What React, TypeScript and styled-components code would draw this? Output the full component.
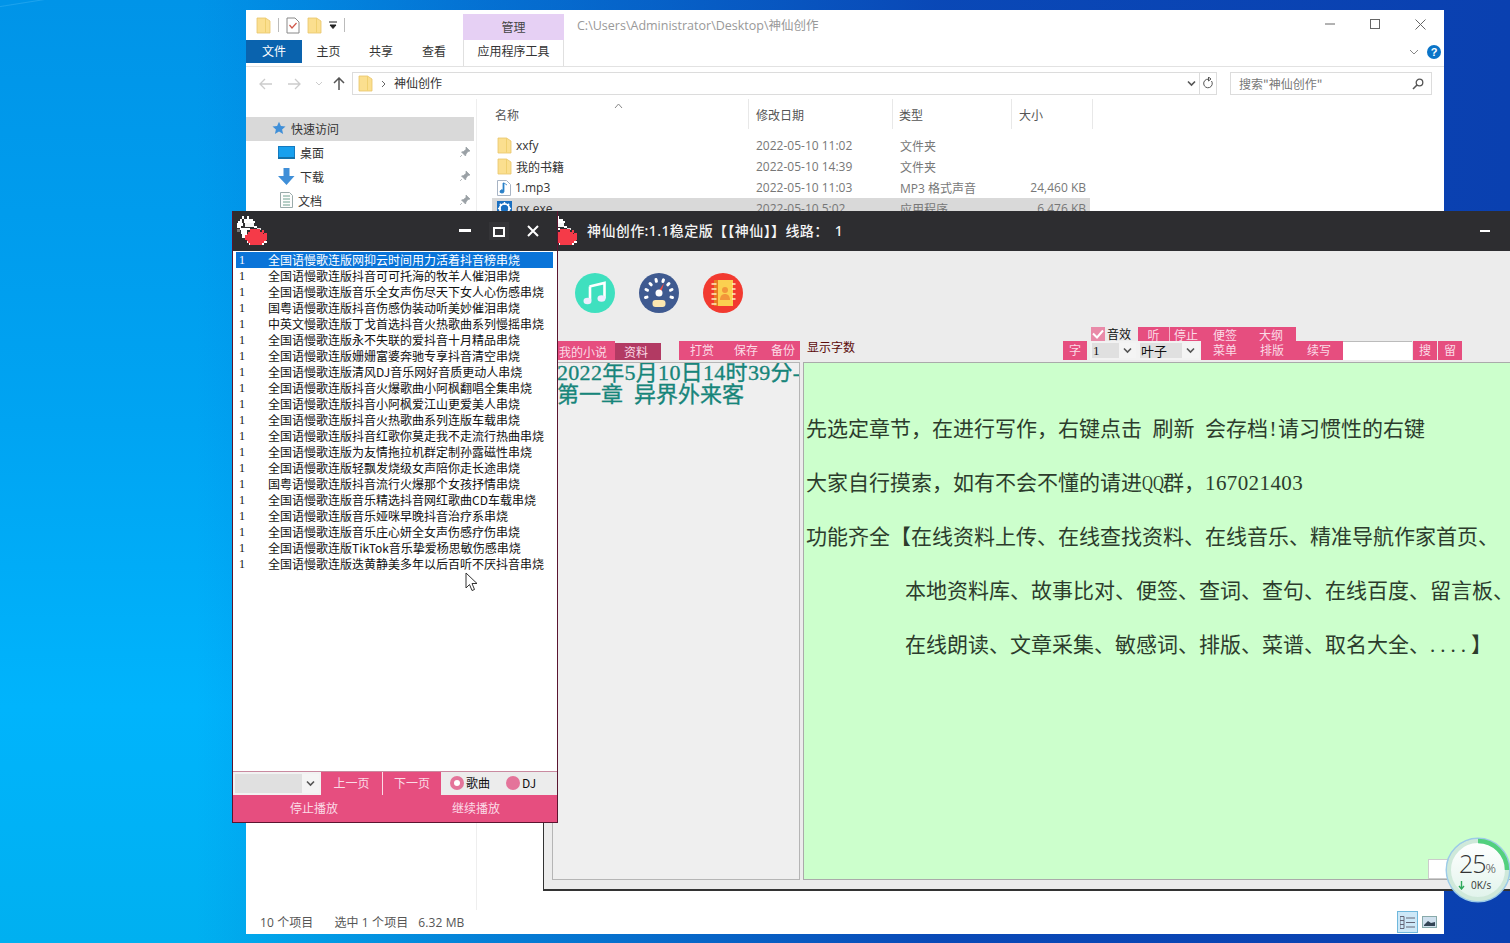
import React from "react";
import styled, { createGlobalStyle } from "styled-components";

const CJK = `"Noto Sans CJK SC", "Noto Sans", sans-serif`;
const UI = `"Open Sans", "Noto Sans CJK SC", sans-serif`;
const SERIF = `"Liberation Serif", "Noto Sans CJK SC", serif`;
const PINK = "#e64e7f";

const Global = createGlobalStyle`
  html, body { margin: 0; padding: 0; background: #0a60c8; }
  * { box-sizing: border-box; }
`;

const Desktop = styled.div`
  position: relative;
  width: 1510px;
  height: 943px;
  overflow: hidden;
  font-family: ${CJK};
  background:
    linear-gradient(171deg, transparent 5.5px, rgba(130,215,255,0.22) 6.5px, transparent 7.5px),
    linear-gradient(90deg, rgba(10,64,176,0) 13%, rgba(10,70,184,0.45) 32%, rgba(10,68,180,0.95) 62%, #0a40b0 100%),
    linear-gradient(180deg, #0094e8 0%, #00a4f2 45%, #00b4fc 75%, #00b0f0 100%);
`;

/* ---------- Explorer ---------- */
const Explorer = styled.div`
  position: absolute;
  left: 246px;
  top: 10px;
  width: 1198px;
  height: 924px;
  background: #fff;
  display: flex;
  flex-direction: column;
  font-family: ${UI};
  font-size: 12px;
  color: #555;
`;
const TitleRow = styled.div`
  display: flex;
  height: 30px;
  align-items: center;
  padding-left: 10px;
  flex: none;
`;
const Qat = styled.div`
  display: flex;
  align-items: center;
  gap: 7px;
  width: 207px;
`;
const QatSep = styled.span`
  width: 1px;
  height: 14px;
  background: #bbb;
`;
const ToolTab = styled.div`
  align-self: flex-end;
  width: 101px;
  height: 26px;
  padding-bottom: 2px;
  background: #e6d0f4;
  color: #444;
  display: flex;
  align-items: center;
  justify-content: center;
  font-family: ${CJK};
  font-size: 12px;
`;
const PathTitle = styled.div`
  margin-left: 13px;
  color: #999;
  font-size: 12.5px;
  flex: 1;
  padding-bottom: 1px;
`;
const WinBtns = styled.div`
  display: flex;
  align-items: center;
  gap: 35px;
  padding-right: 18px;
  color: #555;
  padding-bottom: 2px;
`;
const TabsRow = styled.div`
  display: flex;
  height: 24px;
  flex: none;
  align-items: stretch;
  font-family: ${CJK};
  font-size: 12px;
  color: #333;
`;
const FileTab = styled.div`
  width: 56px;
  height: 23px;
  background: #0a63ae;
  color: #fff;
  display: flex;
  align-items: center;
  justify-content: center;
  padding-bottom: 2px;
`;
const RibbonTab = styled.div<{ $w: number }>`
  width: ${(p) => p.$w}px;
  display: flex;
  align-items: center;
  justify-content: center;
  padding-bottom: 3px;
`;
const AppTab = styled.div`
  margin-left: 2px;
  width: 101px;
  display: flex;
  align-items: center;
  justify-content: center;
  border-left: 1px solid #e0e0e0;
  border-right: 1px solid #e0e0e0;
  height: 26px;
  padding-bottom: 5px;
  background: #fff;
`;
const RibbonEnd = styled.div`
  flex: 1;
  display: flex;
  justify-content: flex-end;
  align-items: center;
  gap: 8px;
  padding-right: 3px;
`;
const Help = styled.span`
  width: 14px;
  height: 14px;
  border-radius: 50%;
  background: #0a74c8;
  color: #fff;
  font: bold 11px/14px "Liberation Sans", sans-serif;
  text-align: center;
`;
const NavRow = styled.div`
  display: flex;
  align-items: center;
  height: 23px;
  margin-top: 8px;
  padding: 0 12px 0 13px;
  flex: none;
  position: relative;
  &::before {
    content: "";
    position: absolute;
    left: 0;
    right: 0;
    top: -6px;
    height: 1px;
    background: #e2e2e2;
  }
`;
const NavArrows = styled.div`
  display: flex;
  align-items: center;
  gap: 14px;
  width: 93px;
  color: #ccc;
`;
const UpArrow = styled.svg`
  margin-left: -4px;
`;
const AddressBox = styled.div`
  width: 865px;
  height: 23px;
  border: 1px solid #dcdcdc;
  display: flex;
  align-items: center;
  padding-left: 5px;
  gap: 8px;
  font-family: ${CJK};
  font-size: 12px;
  color: #333;
`;
const AddrName = styled.span`
  padding-bottom: 2px;
`;
const AddressEnd = styled.div`
  margin-left: auto;
  display: flex;
  align-items: center;
  height: 100%;
`;
const AddressChev = styled.div`
  display: flex;
  align-items: center;
  height: 100%;
  padding-right: 3px;
`;
const AddressRefresh = styled.div`
  display: flex;
  align-items: center;
  justify-content: center;
  width: 17px;
  height: 100%;
  border-left: 1px solid #dcdcdc;
`;
const SearchBox = styled.div`
  margin-left: 13px;
  width: 202px;
  height: 23px;
  border: 1px solid #dcdcdc;
  display: flex;
  align-items: center;
  justify-content: space-between;
  padding: 0 7px 0 8px;
  color: #777;
  font-family: ${CJK};
  font-size: 12px;
`;
const ContentArea = styled.div`
  flex: 1;
  display: flex;
  margin-top: 4px;
  min-height: 0;
`;
const Sidebar = styled.div`
  width: 231px;
  padding-top: 18px;
  border-right: 1px solid #eee;
  font-family: ${CJK};
  font-size: 12px;
  color: #333;
`;
const SideItem = styled.div<{ $active?: boolean; $indent: number }>`
  height: 24px;
  display: flex;
  align-items: center;
  gap: 5px;
  padding-left: ${(p) => p.$indent}px;
  padding-right: 3px;
  padding-bottom: 2px;
  width: 228px;
  background: ${(p) => (p.$active ? "#d9d9d9" : "transparent")};
`;
const SidePin = styled.span`
  margin-left: auto;
  display: flex;
`;
const FilePane = styled.div`
  flex: 1;
  display: flex;
  flex-direction: column;
  padding-left: 15px;
`;
const HeaderRow = styled.div`
  display: grid;
  grid-template-columns: 257px 144px 119px 81px;
  height: 30px;
  position: relative;
  font-family: ${CJK};
  color: #555;
`;
const HeaderCell = styled.div<{ $pl: number }>`
  display: flex;
  align-items: center;
  padding-left: ${(p) => p.$pl}px;
  border-right: 1px solid #e8e8e8;
`;
const SortCaret = styled.span`
  position: absolute;
  left: 122px;
  top: -4px;
  color: #888;
`;
const FileRows = styled.div`
  margin-top: 6px;
`;
const FileRow = styled.div<{ $sel?: boolean }>`
  display: grid;
  grid-template-columns: 257px 144px 119px 78px;
  height: 21px;
  align-items: center;
  width: 598px;
  background: ${(p) => (p.$sel ? "#d9d9d9" : "transparent")};
`;
const NameCell = styled.div`
  display: flex;
  align-items: center;
  gap: 4px;
  padding-left: 5px;
  color: #333;
`;
const DateCell = styled.div`
  padding-left: 7px;
  color: #777;
`;
const TypeCell = styled.div`
  padding-left: 7px;
  color: #777;
`;
const SizeCell = styled.div`
  text-align: right;
  padding-right: 4px;
  color: #777;
`;
const StatusBar = styled.div`
  height: 24px;
  flex: none;
  display: flex;
  align-items: center;
  padding-left: 14px;
  color: #555;
  position: relative;
  letter-spacing: 0.1px;
`;
const StatusGap = styled.span<{ $w: number }>`
  margin-left: ${(p) => p.$w}px;
`;
const ViewBtns = styled.div`
  position: absolute;
  right: 6px;
  bottom: 1px;
  display: flex;
  gap: 2px;
  align-items: center;
`;
const ViewBtn = styled.div<{ $on?: boolean; $w: number }>`
  width: ${(p) => p.$w}px;
  height: 22px;
  display: flex;
  align-items: center;
  justify-content: center;
  background: ${(p) => (p.$on ? "#cde8f8" : "transparent")};
  border: 1px solid ${(p) => (p.$on ? "#70b8dc" : "transparent")};
`;

/* ---------- Main window ---------- */
const MainWin = styled.div`
  position: absolute;
  left: 543px;
  top: 211px;
  width: 967px;
  height: 680px;
  background: #ececec;
  border-left: 1px solid #333;
  border-bottom: 2px solid #333;
  display: flex;
  flex-direction: column;
`;
const DarkBar = styled.div`
  height: 40px;
  flex: none;
  background: #2d2d30;
  display: flex;
  align-items: center;
  color: #fff;
`;
const MainTitle = styled.div`
  margin-left: 9px;
  font-size: 14px;
  font-weight: 500;
  color: #f4f4f4;
  flex: 1;
  white-space: pre;
  letter-spacing: 0.4px;
  padding-bottom: 2px;
  font-family: "Noto Sans", ${CJK};
`;
const TitleColon = styled.span`
  margin-right: 6px;
`;
const MainLogo = styled.div`
  margin-left: 2px;
  display: flex;
`;
const MainMin = styled.div`
  width: 10px;
  height: 2px;
  background: #fff;
  margin-right: 20px;
`;
const IconRow = styled.div`
  height: 76px;
  flex: none;
  display: flex;
  gap: 24px;
  padding: 22px 0 0 31px;
`;
const ToolRow = styled.div`
  height: 35px;
  flex: none;
  display: flex;
  align-items: flex-end;
  padding-left: 14px;
  padding-bottom: 2px;
`;
const NovelTab = styled.div<{ $dark?: boolean; $w: number }>`
  width: ${(p) => p.$w}px;
  height: ${(p) => (p.$dark ? 17 : 19)}px;
  background: ${(p) => (p.$dark ? "#b23a63" : PINK)};
  color: #fbdbe6;
  font-size: 12px;
  display: flex;
  align-items: center;
  padding-left: ${(p) => (p.$dark ? 9 : 1)}px;
  padding-top: ${(p) => (p.$dark ? 0 : 1)}px;
`;
const ActionTabs = styled.div`
  margin-left: 18px;
  width: 121px;
  height: 19px;
  background: ${PINK};
  color: #fbdbe6;
  font-size: 12px;
  display: grid;
  grid-template-columns: 44px 37px 24px;
  padding-left: 11px;
  align-items: center;
  padding-bottom: 2px;
`;
const CountLabel = styled.div`
  margin-left: 7px;
  align-self: center;
  padding-top: 5px;
  font-size: 12px;
  color: #5c0a0a;
`;
const RightTools = styled.div`
  margin-left: auto;
  margin-right: 48px;
  width: 399px;
  display: flex;
  flex-direction: column;
`;
const ToolTop = styled.div`
  display: flex;
  height: 14px;
  padding-left: 28px;
  align-items: flex-start;
`;
const Check = styled.span`
  width: 14px;
  height: 14px;
  background: #e98aa8;
  display: flex;
  align-items: center;
  justify-content: center;
`;
const SfxLabel = styled.span`
  font-size: 12px;
  line-height: 14px;
  color: #111;
  margin-left: 2px;
  width: 31px;
`;
const TopPink = styled.div`
  width: 158px;
  height: 15px;
  background: ${PINK};
  color: #fbdbe6;
  font-size: 12px;
  display: grid;
  grid-template-columns: 32px 32px 46px 46px 2px;
  justify-items: center;
  align-items: center;
`;
const TopCell = styled.span<{ $sep?: boolean }>`
  width: 100%;
  height: 100%;
  line-height: 15px;
  text-align: center;
  border-right: ${(p) => (p.$sep ? "1px solid #f4b4c8" : "none")};
`;
const ToolBottom = styled.div`
  display: flex;
  height: 19px;
  align-items: stretch;
`;
const SqBtn = styled.div<{ $ml?: number }>`
  width: 24px;
  margin-left: ${(p) => p.$ml ?? 0}px;
  background: ${PINK};
  color: #fbdbe6;
  font-size: 12px;
  display: flex;
  align-items: center;
  justify-content: center;
  padding-bottom: 2px;
`;
const Drop = styled.div<{ $w: number; $ml?: number }>`
  width: ${(p) => p.$w}px;
  margin-left: ${(p) => p.$ml ?? 0}px;
  background: #f4f4f4;
  border: 2px solid #f2f2f2;
  display: flex;
  align-items: stretch;
  font-size: 13px;
  color: #111;
`;
const DropVal = styled.div<{ $serif?: boolean }>`
  flex: 1;
  background: #e0e0e0;
  padding-left: 1px;
  line-height: 15px;
  white-space: nowrap;
  font-family: ${(p) => (p.$serif ? SERIF : CJK)};
`;
const DropArrow = styled.div`
  width: 17px;
  display: flex;
  align-items: center;
  justify-content: center;
`;
const BottomPink = styled.div`
  width: 142px;
  background: ${PINK};
  color: #fbdbe6;
  font-size: 12px;
  display: grid;
  grid-template-columns: 48px 46px 48px;
  justify-items: center;
  align-items: center;
  padding-bottom: 2px;
`;
const SearchInput = styled.div`
  width: 69px;
  background: #fff;
  border-top: 1px solid #bbb;
`;
const Panels = styled.div`
  height: 518px;
  flex: none;
  display: flex;
  padding-left: 8px;
  gap: 3px;
`;
const ChapterPanel = styled.div`
  width: 248px;
  border: 1px solid #b5b5b5;
  background: #efefef;
  overflow: hidden;
  padding-left: 4px;
  color: #17857a;
  font-family: ${SERIF};
  font-size: 22px;
  line-height: 22px;
  font-weight: 400;
  white-space: pre;
  -webkit-text-stroke: 0.35px #17857a;
`;
const ChapterDate = styled.div`
  letter-spacing: 0.3px;
  margin-top: -1px;
`;
const Editor = styled.div`
  flex: 1;
  position: relative;
  background: #ccffcc;
  border-left: 1px solid #aaa;
  border-top: 1px solid #aaa;
  border-bottom: 1px solid #aaa;
  padding: 39px 0 0 2px;
  font-family: ${SERIF};
  font-size: 21px;
  line-height: 54px;
  color: #2c3c2c;
  white-space: pre;
  overflow: hidden;
`;
const EditorLine = styled.div<{ $indent?: boolean }>`
  padding-left: ${(p) => (p.$indent ? 99 : 0)}px;
`;
const Spaced = styled.span<{ $ls: number }>`
  letter-spacing: ${(p) => p.$ls}px;
`;
const Bang = styled.span`
  padding: 0 1.5px;
`;
const NarrowLatin = styled.span`
  display: inline-block;
  width: 21px;
  transform: scaleX(0.72);
  transform-origin: left center;
`;
const CornerBox = styled.div`
  position: absolute;
  right: 60px;
  bottom: 0;
  width: 22px;
  height: 20px;
  background: #fff;
  border: 1px solid #ccc;
`;

/* ---------- Player ---------- */
const Player = styled.div`
  position: absolute;
  left: 232px;
  top: 211px;
  width: 326px;
  height: 612px;
  border: 1px solid #5a1530;
  border-top: 0;
  display: flex;
  flex-direction: column;
  background: #fff;
`;
const PlayerLogo = styled.div`
  margin-left: 3px;
  display: flex;
  flex: 1;
`;
const CtrlBtn = styled.div`
  width: 34px;
  height: 24px;
  display: flex;
  align-items: center;
  justify-content: center;
`;
const MaxFace = styled.div`
  width: 20px;
  height: 18px;
  background: #343437;
  display: flex;
  align-items: center;
  justify-content: center;
`;
const CtrlRow = styled.div`
  display: flex;
  margin-right: 7px;
`;
const SongList = styled.div`
  flex: 1;
  padding: 1px 3px 0;
  font-size: 12px;
  color: #111;
`;
const Song = styled.div<{ $sel?: boolean }>`
  height: 16px;
  line-height: 16px;
  display: flex;
  white-space: nowrap;
  width: 317px;
  background: ${(p) => (p.$sel ? "#0a74d8" : "transparent")};
  color: ${(p) => (p.$sel ? "#fff" : "#111")};
`;
const SongNo = styled.span`
  width: 32px;
  padding-left: 3px;
  font-family: ${SERIF};
`;
const PlayerRow1 = styled.div`
  height: 24px;
  flex: none;
  display: flex;
  border-top: 1px solid #c98aa0;
  font-size: 12px;
`;
const PageBtns = styled.div`
  width: 120px;
  background: ${PINK};
  color: #fbdbe6;
  display: grid;
  grid-template-columns: 62px 58px;
`;
const PageBtn = styled.div<{ $sep?: boolean }>`
  display: flex;
  align-items: center;
  justify-content: center;
  padding-bottom: 2px;
  border-right: ${(p) => (p.$sep ? "1px solid #fbdbe6" : "none")};
`;
const Radios = styled.div`
  flex: 1;
  background: #ececec;
  display: flex;
  align-items: center;
  padding-left: 9px;
  padding-bottom: 2px;
  color: #111;
`;
const RadioDot = styled.span<{ $on?: boolean; $ml?: number }>`
  width: 14px;
  height: 14px;
  border-radius: 50%;
  margin-left: ${(p) => p.$ml ?? 0}px;
  margin-right: 2px;
  background: #e4749a;
  display: flex;
  align-items: center;
  justify-content: center;
  &::after {
    content: "";
    width: 6px;
    height: 6px;
    border-radius: 50%;
    background: ${(p) => (p.$on ? "#fff" : "transparent")};
  }
`;
const PlayerRow2 = styled.div`
  height: 27px;
  flex: none;
  background: ${PINK};
  color: #fbdbe6;
  font-size: 12px;
  display: grid;
  grid-template-columns: 162px 162px;
  justify-items: center;
  align-items: center;
  padding-bottom: 2px;
`;

/* ---------- Overlays ---------- */
const Cursor = styled.svg`
  position: absolute;
  left: 465px;
  top: 572px;
`;
const Speed = styled.div`
  position: absolute;
  left: 1445px;
  top: 837px;
  width: 66px;
  height: 66px;
`;
const SpeedRing = styled.svg`
  position: absolute;
  inset: 0;
`;
const SpeedPct = styled.div`
  position: absolute;
  left: 14px;
  top: 12px;
  font-family: "Open Sans", sans-serif;
  font-weight: 300;
  font-size: 25px;
  line-height: 28px;
  color: #333;
  letter-spacing: -1px;
  & > small {
    font-size: 13px;
    letter-spacing: 0;
  }
`;
const SpeedNet = styled.div`
  position: absolute;
  left: 13px;
  top: 41px;
  display: flex;
  align-items: center;
  gap: 6px;
  font-family: "Open Sans", sans-serif;
  font-size: 10px;
  color: #333;
`;

/* ---------- Drawings ---------- */
const Folder = ({ s = 15 }: { s?: number }) => (
  <svg width={s} height={s + 2} viewBox="0 0 15 17">
    <path d="M1 1h8.5l4.5 3v12H1z" fill="#fbdf8f" stroke="#e8c46a" strokeWidth="0.8" />
    <path d="M9.5 1v14.5" stroke="#f0d070" fill="none" />
  </svg>
);
const Doc = () => (
  <svg width="14" height="17" viewBox="0 0 14 17">
    <path d="M1 1h8l4 4v11H1z" fill="#fff" stroke="#888" />
    <path d="M3.5 8l2.5 3 4.5-5" fill="none" stroke="#d0584a" strokeWidth="1.2" />
  </svg>
);
const Chev = ({ c = "#555" }: { c?: string }) => (
  <svg width="9" height="7" viewBox="0 0 9 7">
    <path d="M1 1.5l3.5 3.5 3.5-3.5" fill="none" stroke={c} strokeWidth="1.6" />
  </svg>
);
const Pin = () => (
  <svg width="12" height="12" viewBox="0 0 12 12">
    <path d="M7 1l4 4-2 .5-2 2.5-.5 2-4-4 2-.5 2.5-2zM3 9l-2 2" fill="#9aa0a5" stroke="#9aa0a5" strokeWidth="0.7" />
  </svg>
);
const Star = () => (
  <svg width="14" height="14" viewBox="0 0 14 14">
    <path d="M7 .8l1.9 4.2 4.6.5-3.4 3 1 4.6L7 10.6l-4.1 2.5 1-4.6-3.4-3 4.6-.5z" fill="#3f8fd8" />
  </svg>
);
const DeskIco = () => (
  <svg width="17" height="13" viewBox="0 0 17 13">
    <rect x="0.5" y="0.5" width="16" height="11" fill="#18a0ee" stroke="#147ac0" />
    <rect x="0" y="11" width="17" height="2" fill="#1470a8" />
  </svg>
);
const DownIco = () => (
  <svg width="17" height="17" viewBox="0 0 17 17">
    <path d="M5.5 0h6v8h5L8.5 17 0 8h5.5z" fill="#3f8fd8" />
  </svg>
);
const TxtIco = () => (
  <svg width="13" height="16" viewBox="0 0 13 16">
    <path d="M.5.5h9l3 3v12H.5z" fill="#fdfdfd" stroke="#9aa" />
    <path d="M3 4h7M3 7h7M3 10h7M3 13h7" stroke="#6fa090" />
  </svg>
);
const MusicFile = () => (
  <svg width="14" height="16" viewBox="0 0 14 16">
    <path d="M.5.5h9l4 4v11H.5z" fill="#fff" stroke="#a8b4c4" />
    <path d="M7 3v8.5a2 1.6 0 1 1-1-1.400V3z M7 3l3 2" fill="#2a80c8" stroke="#2a80c8" strokeWidth="0.8" />
  </svg>
);
const Gear = () => (
  <svg width="15" height="15" viewBox="0 0 16 16">
    <rect width="16" height="16" fill="#1a6fc0" />
    <circle cx="8" cy="8" r="5" fill="none" stroke="#fff" strokeWidth="2" />
    <path d="M8 1v3M8 12v3M1 8h3M12 8h3M3 3l2 2M11 11l2 2M13 3l-2 2M3 13l2-2" stroke="#fff" strokeWidth="1.5" />
  </svg>
);

const PIX: [number, number, number, number, string][] = [
  [5, 0, 2, 2, "#fff"], [9, 0, 2, 2, "#fff"], [3, 2, 2, 2, "#fff"], [7, 2, 7, 2, "#fff"],
  [2, 4, 3, 2, "#fff"], [5, 4, 2, 2, "#333"], [7, 4, 9, 2, "#fff"], [1, 6, 3, 4, "#fff"],
  [4, 6, 2, 2, "#fff"], [8, 6, 7, 3, "#f4f4f4"], [6, 8, 2, 2, "#333"], [3, 10, 9, 2, "#fff"],
  [4, 12, 5, 3, "#fff"], [5, 15, 4, 3, "#fff"], [1, 11, 2, 2, "#777"], [6, 18, 3, 2, "#333"],
  [15, 8, 3, 2, "#fff"], [18, 10, 3, 2, "#ddd"],
  [12, 11, 8, 2, "#f53a48"], [10, 13, 13, 2, "#f53a48"], [9, 15, 16, 6, "#f53a48"], [10, 21, 14, 2, "#f53a48"],
  [12, 23, 10, 1, "#f53a48"], [8, 16, 1, 4, "#f53a48"], [24, 14, 2, 6, "#f53a48"], [22, 12, 2, 2, "#f53a48"],
  [11, 23, 1, 1, "#fff"], [24, 21, 2, 2, "#fff"], [22, 23, 2, 1, "#fff"], [9, 21, 1, 2, "#fff"],
];
const Logo = () => (
  <svg width="32" height="30" viewBox="0 0 27 25" shapeRendering="crispEdges">
    {PIX.map((p, i) => (
      <rect key={i} x={p[0]} y={p[1]} width={p[2]} height={p[3]} fill={p[4]} />
    ))}
  </svg>
);
const MusicIcon = () => (
  <svg width="40" height="40" viewBox="0 0 40 40">
    <circle cx="20" cy="20" r="20" fill="#3fe0bf" />
    <path d="M14.5 13.5l15-3.5v15.5" fill="none" stroke="#fff" strokeWidth="2.6" />
    <path d="M15 13.5v14" fill="none" stroke="#fff" strokeWidth="2.6" />
    <ellipse cx="12.5" cy="28" rx="4" ry="3.3" fill="#eef" />
    <ellipse cx="26.5" cy="25.5" rx="4" ry="3.3" fill="#eef" />
  </svg>
);
const GaugeIcon = () => (
  <svg width="40" height="40" viewBox="0 0 40 40">
    <circle cx="20" cy="20" r="20" fill="#3f5a90" />
    <g stroke="#fff" strokeWidth="3" strokeLinecap="round" fill="none">
      <path d="M6.5 24.5l1.5-.4M7 16.5l1.500.8M11 10.5l1.200 1.300M17 6.5l.4 1.800M24.5 6.800l-.6 1.700M30 10.500l-1.200 1.300M33 16.500l-1.500.8M33.500 24.500l-1.500-.4" />
    </g>
    <path d="M19 19l6-9-3 10z" fill="#f04a40" />
    <circle cx="20" cy="20" r="3.5" fill="#fff" />
    <rect x="13.5" y="27" width="13" height="7" rx="3" fill="#fbe6b0" />
  </svg>
);
const BookIcon = () => (
  <svg width="40" height="40" viewBox="0 0 40 40">
    <circle cx="20" cy="20" r="20" fill="#f23a30" />
    <rect x="11" y="7" width="19" height="26" fill="#f09a2a" />
    <rect x="15" y="7" width="15" height="26" fill="#fbd050" />
    <rect x="11" y="7" width="4" height="26" fill="#e87a20" />
    <path d="M8.5 11h5M8.5 16h5M8.5 21h5M8.5 26h5M8.5 31h5" stroke="#fff2c0" strokeWidth="1.5" />
    <path d="M29 11h3.5M29 16h3.5M29 21h3.5M29 26h3.5" stroke="#fff2c0" strokeWidth="1.5" />
    <circle cx="22" cy="17" r="3" fill="#f2963a" />
    <path d="M17 27c0-4 2-6 5-6s5 2 5 6z" fill="#f2963a" />
  </svg>
);

const SONGS = [
  "全国语慢歌连版网抑云时间用力活着抖音榜串烧",
  "全国语慢歌连版抖音可可托海的牧羊人催泪串烧",
  "全国语慢歌连版音乐全女声伤尽天下女人心伤感串烧",
  "国粤语慢歌连版抖音伤感伪装动听美妙催泪串烧",
  "中英文慢歌连版丁戈首选抖音火热歌曲系列慢摇串烧",
  "全国语慢歌连版永不失联的爱抖音十月精品串烧",
  "全国语慢歌连版姗姗富婆奔驰专享抖音清空串烧",
  "全国语慢歌连版清风DJ音乐网好音质更动人串烧",
  "全国语慢歌连版抖音火爆歌曲小阿枫翻唱全集串烧",
  "全国语慢歌连版抖音小阿枫爱江山更爱美人串烧",
  "全国语慢歌连版抖音火热歌曲系列连版车载串烧",
  "全国语慢歌连版抖音红歌你莫走我不走流行热曲串烧",
  "全国语慢歌连版为友情拖拉机群定制孙露磁性串烧",
  "全国语慢歌连版轻飘发烧级女声陪你走长途串烧",
  "国粤语慢歌连版抖音流行火爆那个女孩抒情串烧",
  "全国语慢歌连版音乐精选抖音网红歌曲CD车载串烧",
  "全国语慢歌连版音乐娅咪早晚抖音治疗系串烧",
  "全国语慢歌连版音乐庄心妍全女声伤感疗伤串烧",
  "全国语慢歌连版TikTok音乐挚爱杨思敏伤感串烧",
  "全国语慢歌连版迭黄静美多年以后百听不厌抖音串烧",
];

export default function App() {
  return (
    <Desktop>
      <Global />
      <Explorer>
        <TitleRow>
          <Qat>
            <Folder />
            <QatSep />
            <Doc />
            <Folder />
            <svg width="8" height="8" viewBox="0 0 8 8">
              <path d="M0 1h8M1 4h6L4 7.5z" stroke="#222" fill="#222" />
            </svg>
            <QatSep />
          </Qat>
          <ToolTab>管理</ToolTab>
          <PathTitle>C:\Users\Administrator\Desktop\神仙创作</PathTitle>
          <WinBtns>
            <svg width="10" height="10" viewBox="0 0 10 10"><path d="M0 5h10" stroke="#666" /></svg>
            <svg width="10" height="10" viewBox="0 0 10 10"><rect x="0.5" y="0.5" width="9" height="9" fill="none" stroke="#666" /></svg>
            <svg width="11" height="11" viewBox="0 0 11 11"><path d="M.5.5l10 10M10.5.5l-10 10" stroke="#666" /></svg>
          </WinBtns>
        </TitleRow>
        <TabsRow>
          <FileTab>文件</FileTab>
          <RibbonTab $w={53}>主页</RibbonTab>
          <RibbonTab $w={52}>共享</RibbonTab>
          <RibbonTab $w={54}>查看</RibbonTab>
          <AppTab>应用程序工具</AppTab>
          <RibbonEnd>
            <svg width="10" height="6" viewBox="0 0 10 6"><path d="M1 1l4 4 4-4" fill="none" stroke="#888" /></svg>
            <Help>?</Help>
          </RibbonEnd>
        </TabsRow>
        <NavRow>
          <NavArrows>
            <svg width="14" height="12" viewBox="0 0 14 12"><path d="M13 6H1M6 1L1 6l5 5" fill="none" stroke="#ccc" strokeWidth="1.3" /></svg>
            <svg width="14" height="12" viewBox="0 0 14 12"><path d="M1 6h12M8 1l5 5-5 5" fill="none" stroke="#ccc" strokeWidth="1.3" /></svg>
            <svg width="8" height="6" viewBox="0 0 8 6"><path d="M1 1l3 3 3-3" fill="none" stroke="#ccc" /></svg>
            <UpArrow width="12" height="13" viewBox="0 0 12 13"><path d="M6 13V1M1 6l5-5 5 5" fill="none" stroke="#555" strokeWidth="1.5" /></UpArrow>
          </NavArrows>
          <AddressBox>
            <Folder />
            <svg width="5" height="8" viewBox="0 0 5 8"><path d="M1 1l3 3-3 3" fill="none" stroke="#666" /></svg>
            <AddrName>神仙创作</AddrName>
            <AddressEnd>
              <AddressChev><Chev /></AddressChev>
              <AddressRefresh>
                <svg width="12" height="13" viewBox="0 0 12 13"><path d="M9.5 4a4.3 4.3 0 1 1-3-1.800M6.5 0v4L9 2z" fill="none" stroke="#555" /></svg>
              </AddressRefresh>
            </AddressEnd>
          </AddressBox>
          <SearchBox>
            <span>搜索"神仙创作"</span>
            <svg width="12" height="12" viewBox="0 0 12 12"><circle cx="7.5" cy="4.5" r="3.3" fill="none" stroke="#555" strokeWidth="1.3" /><path d="M5 7l-4 4" stroke="#555" strokeWidth="1.6" /></svg>
          </SearchBox>
        </NavRow>
        <ContentArea>
          <Sidebar>
            <SideItem $active $indent={26}><Star />快速访问</SideItem>
            <SideItem $indent={32}><DeskIco />桌面<SidePin><Pin /></SidePin></SideItem>
            <SideItem $indent={32}><DownIco />下载<SidePin><Pin /></SidePin></SideItem>
            <SideItem $indent={34}><TxtIco />文档<SidePin><Pin /></SidePin></SideItem>
          </Sidebar>
          <FilePane>
            <HeaderRow>
              <SortCaret>
                <svg width="9" height="6" viewBox="0 0 9 6"><path d="M1 5l3.5-4L8 5" fill="none" stroke="#888" /></svg>
              </SortCaret>
              <HeaderCell $pl={3}>名称</HeaderCell>
              <HeaderCell $pl={7}>修改日期</HeaderCell>
              <HeaderCell $pl={6}>类型</HeaderCell>
              <HeaderCell $pl={7}>大小</HeaderCell>
            </HeaderRow>
            <FileRows>
              <FileRow><NameCell><Folder />xxfy</NameCell><DateCell>2022-05-10 11:02</DateCell><TypeCell>文件夹</TypeCell><SizeCell /></FileRow>
              <FileRow><NameCell><Folder />我的书籍</NameCell><DateCell>2022-05-10 14:39</DateCell><TypeCell>文件夹</TypeCell><SizeCell /></FileRow>
              <FileRow><NameCell><MusicFile />1.mp3</NameCell><DateCell>2022-05-10 11:03</DateCell><TypeCell>MP3 格式声音</TypeCell><SizeCell>24,460 KB</SizeCell></FileRow>
              <FileRow $sel><NameCell><Gear />qx.exe</NameCell><DateCell>2022-05-10 5:02</DateCell><TypeCell>应用程序</TypeCell><SizeCell>6,476 KB</SizeCell></FileRow>
            </FileRows>
          </FilePane>
        </ContentArea>
        <StatusBar>
          <span>10 个项目</span>
          <StatusGap $w={21}>选中 1 个项目</StatusGap>
          <StatusGap $w={10}>6.32 MB</StatusGap>
          <ViewBtns>
            <ViewBtn $on $w={21}>
              <svg width="15" height="13" viewBox="0 0 15 13"><path d="M0 .5h4v4H0zM0 8.5h4v4H0zM6 2h9M6 6.5h9M6 11h9M0 4.5h4v4H0z" fill="none" stroke="#667" /></svg>
            </ViewBtn>
            <ViewBtn $w={18}>
              <svg width="15" height="12" viewBox="0 0 15 12"><rect x="0.5" y="0.5" width="14" height="11" fill="#cfe0ee" stroke="#8aa" /><path d="M2 9l4-4 3 2 4-1v4H2z" fill="#345" /></svg>
            </ViewBtn>
          </ViewBtns>
        </StatusBar>
      </Explorer>

      <MainWin>
        <DarkBar>
          <MainLogo><Logo /></MainLogo>
          <MainTitle>神仙创作:1.1稳定版【【神仙】】线路<TitleColon>：</TitleColon>1</MainTitle>
          <MainMin />
        </DarkBar>
        <IconRow>
          <MusicIcon />
          <GaugeIcon />
          <BookIcon />
        </IconRow>
        <ToolRow>
          <NovelTab $w={57}>我的小说</NovelTab>
          <NovelTab $dark $w={46}>资料</NovelTab>
          <ActionTabs><span>打赏</span><span>保存</span><span>备份</span></ActionTabs>
          <CountLabel>显示字数</CountLabel>
          <RightTools>
            <ToolTop>
              <Check>
                <svg width="12" height="10" viewBox="0 0 12 10"><path d="M1 4.5l4 4 6-7" fill="none" stroke="#fff" strokeWidth="2" /></svg>
              </Check>
              <SfxLabel>音效</SfxLabel>
              <TopPink>
                <TopCell $sep>听</TopCell><TopCell>停止</TopCell><TopCell>便签</TopCell><TopCell>大纲</TopCell>
              </TopPink>
            </ToolTop>
            <ToolBottom>
              <SqBtn>字</SqBtn>
              <Drop $w={48} $ml={3}><DropVal $serif>1</DropVal><DropArrow><Chev /></DropArrow></Drop>
              <Drop $w={63}><DropVal>叶子</DropVal><DropArrow><Chev /></DropArrow></Drop>
              <BottomPink><span>菜单</span><span>排版</span><span>续写</span></BottomPink>
              <SearchInput />
              <SqBtn $ml={1}>搜</SqBtn>
              <SqBtn $ml={1}>留</SqBtn>
            </ToolBottom>
          </RightTools>
        </ToolRow>
        <Panels>
          <ChapterPanel>
            <ChapterDate>2022年5月10日14时39分-</ChapterDate>
            <div>第一章  异界外来客</div>
          </ChapterPanel>
          <Editor>
            <EditorLine>先选定章节，在进行写作，右键点击  刷新  会存档<Bang>!</Bang>请习惯性的右键</EditorLine>
            <EditorLine>大家自行摸索，如有不会不懂的请进<NarrowLatin>QQ</NarrowLatin>群，<Spaced $ls={0.4}>167021403</Spaced></EditorLine>
            <EditorLine>功能齐全【在线资料上传、在线查找资料、在线音乐、精准导航作家首页、</EditorLine>
            <EditorLine $indent>本地资料库、故事比对、便签、查词、查句、在线百度、留言板、</EditorLine>
            <EditorLine $indent>在线朗读、文章采集、敏感词、排版、菜谱、取名大全、<Spaced $ls={5}>....</Spaced>】</EditorLine>
            <CornerBox />
          </Editor>
        </Panels>
      </MainWin>

      <Player>
        <DarkBar>
          <PlayerLogo><Logo /></PlayerLogo>
          <CtrlRow>
            <CtrlBtn>
              <svg width="12" height="4" viewBox="0 0 12 4"><rect width="12" height="3" fill="#fff" /></svg>
            </CtrlBtn>
            <CtrlBtn>
              <MaxFace>
                <svg width="12" height="11" viewBox="0 0 12 11"><path d="M1 2h10v8H1z" fill="none" stroke="#fff" strokeWidth="2" /></svg>
              </MaxFace>
            </CtrlBtn>
            <CtrlBtn>
              <svg width="12" height="12" viewBox="0 0 12 12"><path d="M1 1l10 10M11 1L1 11" stroke="#fff" strokeWidth="2" /></svg>
            </CtrlBtn>
          </CtrlRow>
        </DarkBar>
        <SongList>
          {SONGS.map((s, i) => (
            <Song key={i} $sel={i === 0}>
              <SongNo>1</SongNo>
              {s}
            </Song>
          ))}
        </SongList>
        <PlayerRow1>
          <Drop $w={88}><DropVal /><DropArrow><Chev /></DropArrow></Drop>
          <PageBtns>
            <PageBtn $sep>上一页</PageBtn>
            <PageBtn>下一页</PageBtn>
          </PageBtns>
          <Radios>
            <RadioDot $on />歌曲
            <RadioDot $ml={16} />DJ
          </Radios>
        </PlayerRow1>
        <PlayerRow2>
          <span>停止播放</span>
          <span>继续播放</span>
        </PlayerRow2>
      </Player>

      <Cursor width="14" height="20" viewBox="0 0 14 20">
        <path d="M1 1v15l3.5-3.5 2.5 6 2.5-1-2.5-6H12z" fill="#fff" stroke="#333" strokeWidth="1" />
      </Cursor>

      <Speed>
        <SpeedRing width="66" height="66" viewBox="0 0 66 66">
          <defs>
            <linearGradient id="sg" x1="0" y1="0" x2="0" y2="1">
              <stop offset="0" stopColor="#fff" />
              <stop offset="1" stopColor="#e2f4ec" />
            </linearGradient>
          </defs>
          <circle cx="33" cy="33" r="31.5" fill="#fff" stroke="#9ccbe8" strokeWidth="2" />
          <circle cx="33" cy="33" r="27.5" fill="url(#sg)" />
          <circle cx="33" cy="33" r="29" fill="none" stroke="#cfe9da" strokeWidth="4" />
          <path d="M33 4a29 29 0 0 1 29 29" fill="none" stroke="#52d07e" strokeWidth="4.5" />
        </SpeedRing>
        <SpeedPct>25<small>%</small></SpeedPct>
        <SpeedNet>
          <svg width="7" height="9" viewBox="0 0 7 9"><path d="M3.5 0v8M1 5l2.5 3L6 5" fill="none" stroke="#2da85a" strokeWidth="1.4" /></svg>
          <span>0K/s</span>
        </SpeedNet>
      </Speed>
    </Desktop>
  );
}
